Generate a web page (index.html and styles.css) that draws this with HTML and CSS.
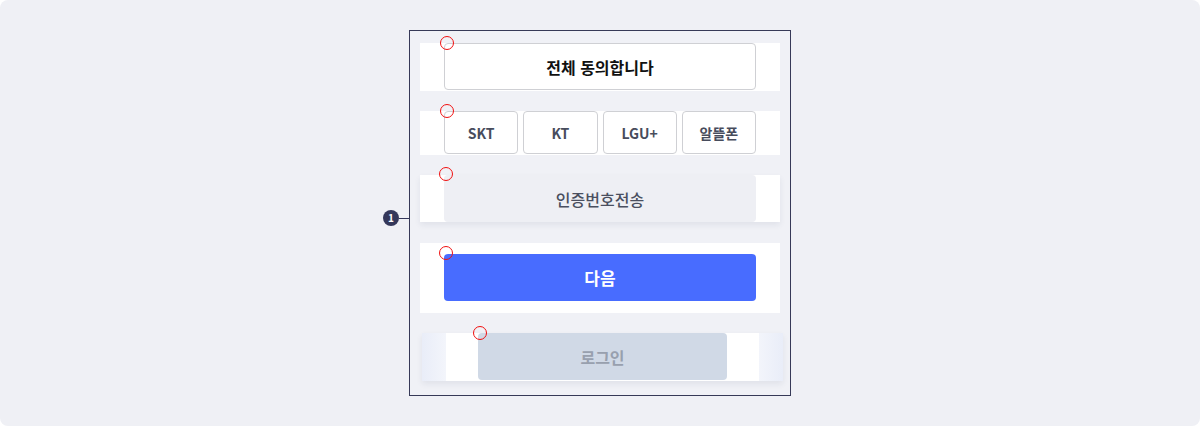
FILE: index.html
```html
<!DOCTYPE html>
<html lang="ko">
<head>
    <meta charset="UTF-8">
    <title>본인인증 버튼</title>
    <link rel="stylesheet" href="styles.css">
</head>
<body>
    <div class="canvas">
        <div class="frame">
            <div class="badge-wrap">
                <span class="badge">1</span>
                <span class="badge-line"></span>
            </div>

            <div class="strip">
                <button class="btn btn-agree">전체 동의합니다<i class="pin"></i></button>
            </div>

            <div class="strip carriers">
                <button class="btn btn-carrier">SKT<i class="pin"></i></button>
                <button class="btn btn-carrier">KT</button>
                <button class="btn btn-carrier">LGU+</button>
                <button class="btn btn-carrier">알뜰폰</button>
            </div>

            <div class="strip shadow">
                <button class="btn btn-send">인증번호전송<i class="pin"></i></button>
            </div>

            <div class="strip tall">
                <button class="btn btn-next">다음<i class="pin"></i></button>
            </div>

            <div class="strip login-strip">
                <div class="login-inner">
                    <button class="btn btn-login">로그인<i class="pin"></i></button>
                </div>
            </div>
        </div>
    </div>
</body>
</html>
```

FILE: styles.css
```css
body {
    margin: 0;
    font-family: "Noto Sans CJK KR", "Noto Sans", sans-serif;
    background: #ffffff;
}

.canvas {
    width: 1200px;
    height: 426px;
    background-color: #eff0f5;
    border-radius: 8px;
    display: flex;
    align-items: center;
    justify-content: center;
}

.frame {
    position: relative;
    width: 382px;
    height: 366px;
    border: 1px solid #363957;
    background-color: #f0f1f6;
    padding: 12px 10px 0;
    box-sizing: border-box;
    display: flex;
    flex-direction: column;
    gap: 20px;
}

.badge-wrap {
    position: absolute;
    left: -27px;
    top: 179px;
    display: flex;
    align-items: center;
}

.badge {
    width: 16px;
    height: 16px;
    border-radius: 50%;
    background-color: #34375a;
    color: #fff;
    font-size: 10px;
    font-weight: 700;
    line-height: 16px;
    text-align: center;
}

.badge-line {
    width: 10px;
    height: 1px;
    background-color: #34375a;
}

.strip {
    background-color: #fff;
    padding: 0 24px;
    display: flex;
}

.strip.shadow {
    box-shadow: 0 3px 6px rgba(40, 50, 90, 0.08);
}

.strip.tall {
    padding: 11px 24px 12px;
    margin-top: 1px;
}

.carriers {
    gap: 5px;
    height: 44px;
}

.btn {
    position: relative;
    font-family: inherit;
    border: none;
    border-radius: 4px;
    cursor: pointer;
    padding: 0;
    width: 100%;
}

.pin {
    position: absolute;
    left: -5px;
    top: -8px;
    width: 12px;
    height: 12px;
    border: 1px solid #f01010;
    border-radius: 50%;
}

.btn-agree {
    height: 47px;
    margin-bottom: 1px;
    background-color: #fff;
    border: 1px solid #cfd0d4;
    font-size: 16px;
    font-weight: 700;
    color: #111;
}

.btn-carrier {
    flex: 1;
    height: 43px;
    background-color: #fff;
    border: 1px solid #cfd0d4;
    font-size: 14px;
    font-weight: 700;
    color: #474c5c;
}

.btn-send {
    height: 47px;
    background-color: #eeeff4;
    font-size: 16px;
    font-weight: 500;
    color: #4a4f5f;
}

.btn-next {
    height: 47px;
    background-color: #486cff;
    font-size: 17px;
    font-weight: 700;
    color: #fff;
}

.login-strip {
    margin: 0 -3px 0 2px;
    height: 48px;
    padding: 0 24px;
    background: linear-gradient(90deg, #e9edf8 0, #f3f5fb 24px, #fff 24px, #fff 336px, #f3f5fb 336px, #e9edf8 100%);
    box-shadow: 0 3px 6px rgba(40, 50, 90, 0.08);
}

.login-inner {
    flex: 1;
    background-color: #fff;
    padding: 0 32px 1px 32px;
    display: flex;
}

.btn-login {
    height: 47px;
    background-color: #d0d9e6;
    font-size: 16px;
    font-weight: 700;
    color: #98a0ae;
}

.btn-login .pin {
    top: -7px;
}
```
